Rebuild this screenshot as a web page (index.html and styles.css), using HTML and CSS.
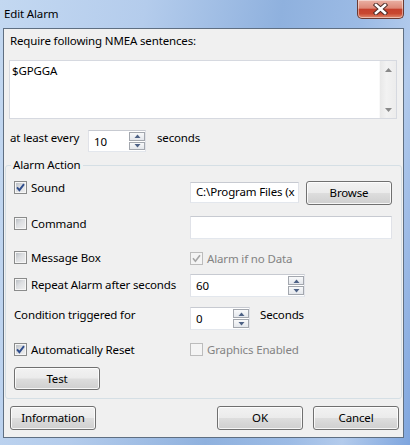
FILE: index.html
```html
<!DOCTYPE html>
<html>
<head>
<meta charset="utf-8">
<title>Edit Alarm</title>
<link rel="stylesheet" href="styles.css">
</head>
<body>
<div class="window">
  <div class="titlebar">
    <span class="title">Edit Alarm</span>
    <div class="close">
      <svg width="15" height="12" viewBox="0 0 15 12">
        <path d="M3 2 L12 10 M12 2 L3 10" stroke="#4a2a26" stroke-width="4.4" stroke-linecap="square" fill="none"/>
        <path d="M3 2 L12 10 M12 2 L3 10" stroke="#ffffff" stroke-width="2.6" stroke-linecap="square" fill="none"/>
      </svg>
    </div>
  </div>
  <div class="client">
    <div class="hdr">Require following NMEA sentences:</div>
    <div class="textarea">
      <div class="ta-text">$GPGGA</div>
      <div class="vscroll">
        <span class="arr"><svg width="7" height="4" viewBox="0 0 7 4"><polygon points="0,4 3.5,0 7,4" fill="#8a8a8a"/></svg></span>
        <span class="arr"><svg width="7" height="4" viewBox="0 0 7 4"><polygon points="0,0 3.5,4 7,0" fill="#8a8a8a"/></svg></span>
      </div>
    </div>
    <div class="every">
      <span class="lbl-every">at least every</span>
      <div class="spin s58">
        <span class="val">10</span>
        <span class="btns">
          <span class="sb"><svg width="7" height="4" viewBox="0 0 7 4"><polygon points="0.5,4 3.5,0.5 6.5,4" fill="#4d6185"/></svg></span>
          <span class="sb"><svg width="7" height="4" viewBox="0 0 7 4"><polygon points="0.5,0 3.5,3.5 6.5,0" fill="#4d6185"/></svg></span>
        </span>
      </div>
      <span class="sec">seconds</span>
    </div>
    <fieldset class="group">
      <legend>Alarm Action</legend>
      <div class="row r1">
        <div class="left">
          <span class="chk"><span class="box"><svg width="11" height="11" viewBox="0 0 11 11"><path d="M2 5.3 L4.4 8.2 L9 2.2" stroke="#2f4d8c" stroke-width="1.9" fill="none"/></svg></span>Sound</span>
        </div>
        <div class="right">
          <div class="input w-sound">C:\Program Files (x</div>
          <div class="btn browse">Browse</div>
        </div>
      </div>
      <div class="row r2">
        <div class="left off1">
          <span class="chk"><span class="box"></span>Command</span>
        </div>
        <div class="right">
          <div class="input w-cmd"></div>
        </div>
      </div>
      <div class="row r3">
        <div class="left">
          <span class="chk"><span class="box"></span>Message Box</span>
        </div>
        <div class="right off1">
          <span class="chk dis"><span class="box"><svg width="11" height="11" viewBox="0 0 11 11"><path d="M2 5.3 L4.4 8.2 L9 2.2" stroke="#a6a6a6" stroke-width="1.6" fill="none"/></svg></span>Alarm if no Data</span>
        </div>
      </div>
      <div class="row r4">
        <div class="left off4">
          <span class="chk"><span class="box"></span>Repeat Alarm after seconds</span>
        </div>
        <div class="right">
          <div class="spin s115">
            <span class="val">60</span>
            <span class="btns">
              <span class="sb"><svg width="7" height="4" viewBox="0 0 7 4"><polygon points="0.5,4 3.5,0.5 6.5,4" fill="#4d6185"/></svg></span>
              <span class="sb"><svg width="7" height="4" viewBox="0 0 7 4"><polygon points="0.5,0 3.5,3.5 6.5,0" fill="#4d6185"/></svg></span>
            </span>
          </div>
        </div>
      </div>
      <div class="row r5">
        <div class="left"><span class="txt">Condition triggered for</span></div>
        <div class="right">
          <div class="spin s60">
            <span class="val">0</span>
            <span class="btns">
              <span class="sb"><svg width="7" height="4" viewBox="0 0 7 4"><polygon points="0.5,4 3.5,0.5 6.5,4" fill="#4d6185"/></svg></span>
              <span class="sb"><svg width="7" height="4" viewBox="0 0 7 4"><polygon points="0.5,0 3.5,3.5 6.5,0" fill="#4d6185"/></svg></span>
            </span>
          </div>
          <span class="txt secs">Seconds</span>
        </div>
      </div>
      <div class="row r6">
        <div class="left">
          <span class="chk"><span class="box"><svg width="11" height="11" viewBox="0 0 11 11"><path d="M2 5.3 L4.4 8.2 L9 2.2" stroke="#2f4d8c" stroke-width="1.9" fill="none"/></svg></span>Automatically Reset</span>
        </div>
        <div class="right">
          <span class="chk dis"><span class="box"></span>Graphics Enabled</span>
        </div>
      </div>
      <div class="row r7">
        <div class="btn test">Test</div>
      </div>
    </fieldset>
    <div class="footer">
      <div class="btn">Information</div>
      <div class="spacer"></div>
      <div class="btn">OK</div>
      <div class="btn cancel">Cancel</div>
    </div>
  </div>
</div>
</body>
</html>
```

FILE: styles.css
```css
* { box-sizing: border-box; }
html, body { margin: 0; padding: 0; }
body {
  width: 410px;
  height: 445px;
  overflow: hidden;
  font-family: "Segoe UI", "Noto Sans", sans-serif;
  font-size: 11.5px;
  letter-spacing: -0.15px;
  color: #000;
}
.window {
  width: 410px;
  height: 445px;
  display: flex;
  flex-direction: column;
  background: linear-gradient(100deg, #c3d8f1 0%, #b4ccec 30%, #8fb1de 58%, #9cbbe5 75%, #b3cbec 86%, #7ea5de 100%);
}
.titlebar {
  height: 28px;
  flex: none;
  display: flex;
  justify-content: space-between;
  align-items: flex-start;
}
.title {
  padding: 6px 0 0 4px;
  line-height: 16px;
}
.close {
  width: 47px;
  height: 19px;
  margin-right: 6px;
  border: 1px solid #6a3a33;
  border-top: none;
  border-radius: 0 0 5px 5px;
  background: linear-gradient(#eab1a4 0%, #dd8877 45%, #c5412d 52%, #c8472f 75%, #e08b6f 100%);
  box-shadow: inset 0 0 0 1px rgba(255,255,255,0.45);
  display: flex;
  align-items: center;
  justify-content: center;
}
.close svg { display: block; }
.client {
  flex: none;
  height: 410px;
  margin: 0 6px 0 3px;
  border: 1px solid #5f6f82;
  background: #f0f0f0;
  display: flex;
  flex-direction: column;
}
.hdr {
  margin-top: 4px;
  padding-left: 6px;
  line-height: 16px;
}
.textarea {
  margin: 11px 0 0 5px;
  width: 388px;
  height: 59px;
  flex: none;
  border: 1px solid #d6d9e0;
  background: #fff;
  display: flex;
}
.ta-text {
  flex: 1;
  padding: 2px 0 0 2px;
  line-height: 16px;
}
.vscroll {
  width: 17px;
  display: flex;
  flex-direction: column;
  justify-content: space-between;
  background: linear-gradient(90deg, #e8e8e8, #f2f2f2 40%, #ececec);
  border-left: 1px solid #f9f9f9;
}
.arr {
  height: 17px;
  display: flex;
  align-items: center;
  justify-content: center;
}
.arr svg { display: block; }
.every {
  margin-top: 11px;
  height: 22px;
  flex: none;
  display: flex;
  align-items: flex-start;
  padding-left: 6px;
}
.lbl-every {
  width: 78px;
  line-height: 16px;
}
.sec {
  margin-left: 11px;
  line-height: 16px;
}
.spin {
  display: flex;
  height: 22px;
  border: 1px solid;
  border-color: #c7cad1 #e0e2e8 #e3e7ed #e0e2e8;
  background: #fff;
}
.s58 { width: 58px; }
.s115 { width: 115px; height: 23px; }
.s60 { width: 60px; height: 23px; }
.spin .val {
  flex: 1;
  padding-left: 5px;
  display: flex;
  align-items: center;
}
.btns {
  width: 16px;
  display: flex;
  flex-direction: column;
  gap: 1px;
  padding: 1px 0 1px 0;
}
.sb {
  flex: 1;
  border: 1px solid #a3a7ae;
  background: linear-gradient(#f8f9fa, #e4e7ec);
  display: flex;
  align-items: center;
  justify-content: center;
}
.sb svg { display: block; }
.group {
  margin: 5px 1px 0 1px;
  padding: 8px 0 8px 8px;
  border: 1px solid #d5dfe5;
  border-radius: 3px;
  min-width: 0;
}
.group legend {
  padding: 0 2px;
  margin-left: -3px;
  line-height: 16px;
}
.row {
  display: flex;
  align-items: flex-start;
}
.left {
  width: 176px;
  flex: none;
}
.right {
  display: flex;
  align-items: flex-start;
}
.off1 { padding-top: 1px; }
.off4 { padding-top: 4px; }
.r1 { height: 24px; }
.r2 { height: 23px; margin-top: 11px; }
.r3 { height: 14px; margin-top: 12px; }
.r4 { height: 23px; margin-top: 9px; }
.r5 { height: 23px; margin-top: 10px; }
.r6 { height: 13px; margin-top: 13px; }
.r7 { margin-top: 11px; }
.chk {
  display: flex;
  align-items: center;
  gap: 4px;
  height: 13px;
  white-space: nowrap;
  line-height: 15px;
}
.box {
  width: 13px;
  height: 13px;
  flex: none;
  border: 1px solid #8a8b8b;
  background: linear-gradient(135deg, #b3b8be 0%, #dcdee1 45%, #f1f1f1 100%);
  box-shadow: inset 0 0 0 1px #f6f6f6;
  display: flex;
  align-items: center;
  justify-content: center;
}
.box svg { display: block; }
.dis { color: #838383; }
.dis .box {
  border-color: #bcbcbc;
  background: #f4f4f4;
  box-shadow: none;
}
.txt {
  display: block;
  line-height: 16px;
  white-space: nowrap;
}
.secs { margin-left: 10px; }
.input {
  height: 23px;
  border: 1px solid;
  border-color: #c7cad1 #e0e2e8 #e3e7ed #e0e2e8;
  background: #fff;
  padding-left: 5px;
  line-height: 20px;
  white-space: nowrap;
  overflow: hidden;
}
.w-sound { width: 109px; height: 21px; margin-top: 1px; line-height: 18px; }
.w-cmd { width: 202px; }
.btn {
  width: 86px;
  height: 24px;
  flex: none;
  border: 1px solid #707070;
  border-radius: 3px;
  background: linear-gradient(#f2f2f2 0%, #ebebeb 48%, #dddddd 52%, #cfcfcf 100%);
  box-shadow: inset 0 0 0 1px rgba(255,255,255,0.8);
  display: flex;
  align-items: center;
  justify-content: center;
  line-height: 16px;
}
.browse { margin-left: 7px; }
.test { height: 23px; }
.footer {
  margin-top: 7px;
  display: flex;
  padding: 0 4px 0 6px;
}
.spacer { flex: 1; }
.cancel { margin-left: 10px; }
```
